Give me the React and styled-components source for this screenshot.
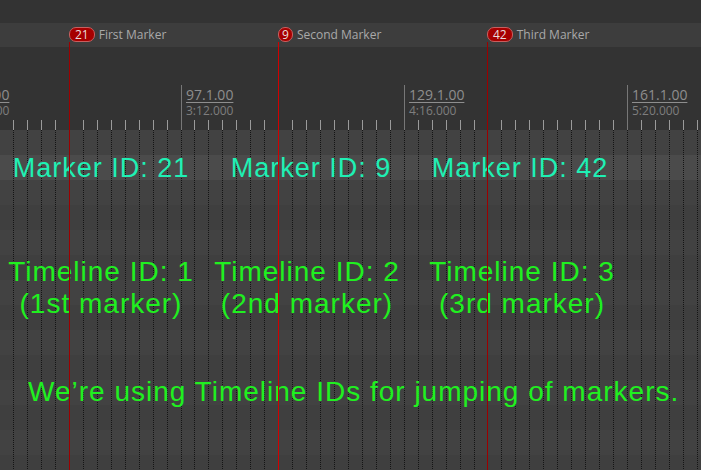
import React from 'react';
import styled, { createGlobalStyle } from 'styled-components';

const STEP = 223.25 / 16;
const X0 = 180.5 - 12 * STEP;
const tickX = (k) => Math.round(X0 + k * STEP);

const markers = [
  { id: 21, name: 'First Marker', k: 4, line: '#9c0000' },
  { id: 9, name: 'Second Marker', k: 19, line: '#d00000' },
  { id: 42, name: 'Third Marker', k: 34, line: '#9c0000' },
];

const bars = [
  { k: -4, bar: '65.1.00', time: '2:08.000' },
  { k: 12, bar: '97.1.00', time: '3:12.000' },
  { k: 28, bar: '129.1.00', time: '4:16.000' },
  { k: 44, bar: '161.1.00', time: '5:20.000' },
];

const GlobalStyle = createGlobalStyle`
  html, body { margin: 0; padding: 0; background: #333; overflow: hidden; }
  #root { width: 701px; height: 470px; }
`;

const Frame = styled.div`
  position: relative;
  width: 701px;
  height: 470px;
  overflow: hidden;
  display: flex;
  flex-direction: column;
  background: #333;
  font-family: "Open Sans", "Noto Sans", sans-serif;
`;

const TopBar = styled.div`
  flex: none;
  height: 23px;
  background: #333333;
`;

const MarkerBand = styled.div`
  position: relative;
  flex: none;
  height: 24px;
  background: #3d3d3d;
`;

const MarkerTag = styled.div`
  position: absolute;
  top: 4px;
  display: flex;
  align-items: center;
  gap: 4px;
`;

const Badge = styled.span`
  box-sizing: border-box;
  height: 15px;
  padding: 0 ${(p) => (p.$wide ? 5 : 3)}px;
  border-radius: 7px;
  background: #a60000;
  border: 1px solid #c66060;
  color: #eadcdc;
  font-size: 12px;
  line-height: 13px;
  display: flex;
  align-items: center;
  justify-content: center;
`;

const MarkerLabel = styled.span`
  color: #a9a9a9;
  font-size: 12px;
  line-height: 15px;
  white-space: nowrap;
`;

const Ruler = styled.div`
  position: relative;
  flex: none;
  height: 83px;
  background: #333333;
`;

const Drawing = styled.svg`
  position: absolute;
  left: 0;
  top: 0;
  display: block;
`;

const BarLabel = styled.div`
  position: absolute;
  top: 39px;
  display: flex;
  flex-direction: column;
  white-space: nowrap;
`;

const BarNumber = styled.span`
  font-size: 14px;
  line-height: 17px;
  color: #8e8e8e;
  text-decoration: underline;
  text-underline-offset: 2px;
`;

const BarTime = styled.span`
  font-size: 12px;
  line-height: 16px;
  color: #7e7e7e;
`;

const Tracks = styled.div`
  position: relative;
  flex: 1;
  display: flex;
  flex-direction: column;
  overflow: hidden;
`;

const Row = styled.div`
  flex: none;
  height: 25px;
  background: ${(p) => (p.$hl ? '#4b4b4b' : p.$alt ? '#3f3f3f' : '#424242')};
`;

const MarkerLine = styled.div`
  position: absolute;
  top: 42px;
  bottom: 0;
  width: 1px;
  background: ${(p) => p.$color};
`;

const Notes = styled.div`
  position: absolute;
  left: 0;
  top: 0;
  right: 0;
  display: flex;
  flex-direction: column;
  padding-top: 23px;
  font-family: "Liberation Sans", Arial, sans-serif;
`;

const NoteGrid = styled.div`
  display: grid;
  grid-template-columns: ${(p) => p.$cols};
  margin-top: ${(p) => p.$mt || 0}px;
`;

const Note = styled.div`
  text-align: center;
  white-space: nowrap;
  color: ${(p) => p.$color};
  font-size: ${(p) => p.$size}px;
  line-height: ${(p) => p.$lh}px;
  letter-spacing: 1px;
`;

const Sentence = styled.div`
  margin-top: 56px;
  padding-left: 28px;
  color: #20f020;
  font-size: 28px;
  line-height: 32px;
  letter-spacing: 1px;
  white-space: nowrap;
`;

const CYAN = '#1ff0b4';
const GREEN = '#20f020';

export default function App() {
  const gridKs = [];
  for (let k = 0; tickX(k) < 701; k++) gridKs.push(k);
  const rows = Array.from({ length: 14 }, (_, i) => i);

  return (
    <>
      <GlobalStyle />
      <Frame>
        <TopBar />
        <MarkerBand>
          {markers.map((m) => (
            <MarkerTag key={m.id} style={{ left: tickX(m.k) }}>
              <Badge $wide={String(m.id).length > 1}>{m.id}</Badge>
              <MarkerLabel>{m.name}</MarkerLabel>
            </MarkerTag>
          ))}
        </MarkerBand>
        <Ruler>
          <Drawing width="701" height="83" shapeRendering="crispEdges">
            {gridKs.map((k) => (
              <line key={k} x1={tickX(k) + 0.5} x2={tickX(k) + 0.5} y1="73" y2="83" stroke="#9a9a9a" />
            ))}
            {bars.map((b) => (
              <line key={b.k} x1={tickX(b.k) + 0.5} x2={tickX(b.k) + 0.5} y1="38" y2="83" stroke="#777" />
            ))}
          </Drawing>
          {bars.map((b) => (
            <BarLabel key={b.k} style={{ left: tickX(b.k) + 5 }}>
              <BarNumber>{b.bar}</BarNumber>
              <BarTime>{b.time}</BarTime>
            </BarLabel>
          ))}
        </Ruler>
        <Tracks>
          {rows.map((i) => (
            <Row key={i} $hl={i === 1} $alt={i % 2 === 1} />
          ))}
          <Drawing width="701" height="340" shapeRendering="crispEdges">
            {gridKs.map((k) => (
              <line key={k} x1={tickX(k) + 0.5} x2={tickX(k) + 0.5} y1="0" y2="340" stroke="#141414" strokeDasharray="1 1" />
            ))}
          </Drawing>
          <Notes>
            <NoteGrid $cols="202px 218px 200px">
              <Note $color={CYAN} $size={27} $lh={30}>Marker ID: 21</Note>
              <Note $color={CYAN} $size={27} $lh={30}>Marker ID: 9</Note>
              <Note $color={CYAN} $size={27} $lh={30}>Marker ID: 42</Note>
            </NoteGrid>
            <NoteGrid $cols="202px 210px 220px" $mt={73}>
              <Note $color={GREEN} $size={28} $lh={32}>Timeline ID: 1<br />(1st marker)</Note>
              <Note $color={GREEN} $size={28} $lh={32}>Timeline ID: 2<br />(2nd marker)</Note>
              <Note $color={GREEN} $size={28} $lh={32}>Timeline ID: 3<br />(3rd marker)</Note>
            </NoteGrid>
            <Sentence>We’re using Timeline IDs for jumping of markers.</Sentence>
          </Notes>
        </Tracks>
        {markers.map((m) => (
          <MarkerLine key={m.id} $color={m.line} style={{ left: tickX(m.k) }} />
        ))}
      </Frame>
    </>
  );
}
